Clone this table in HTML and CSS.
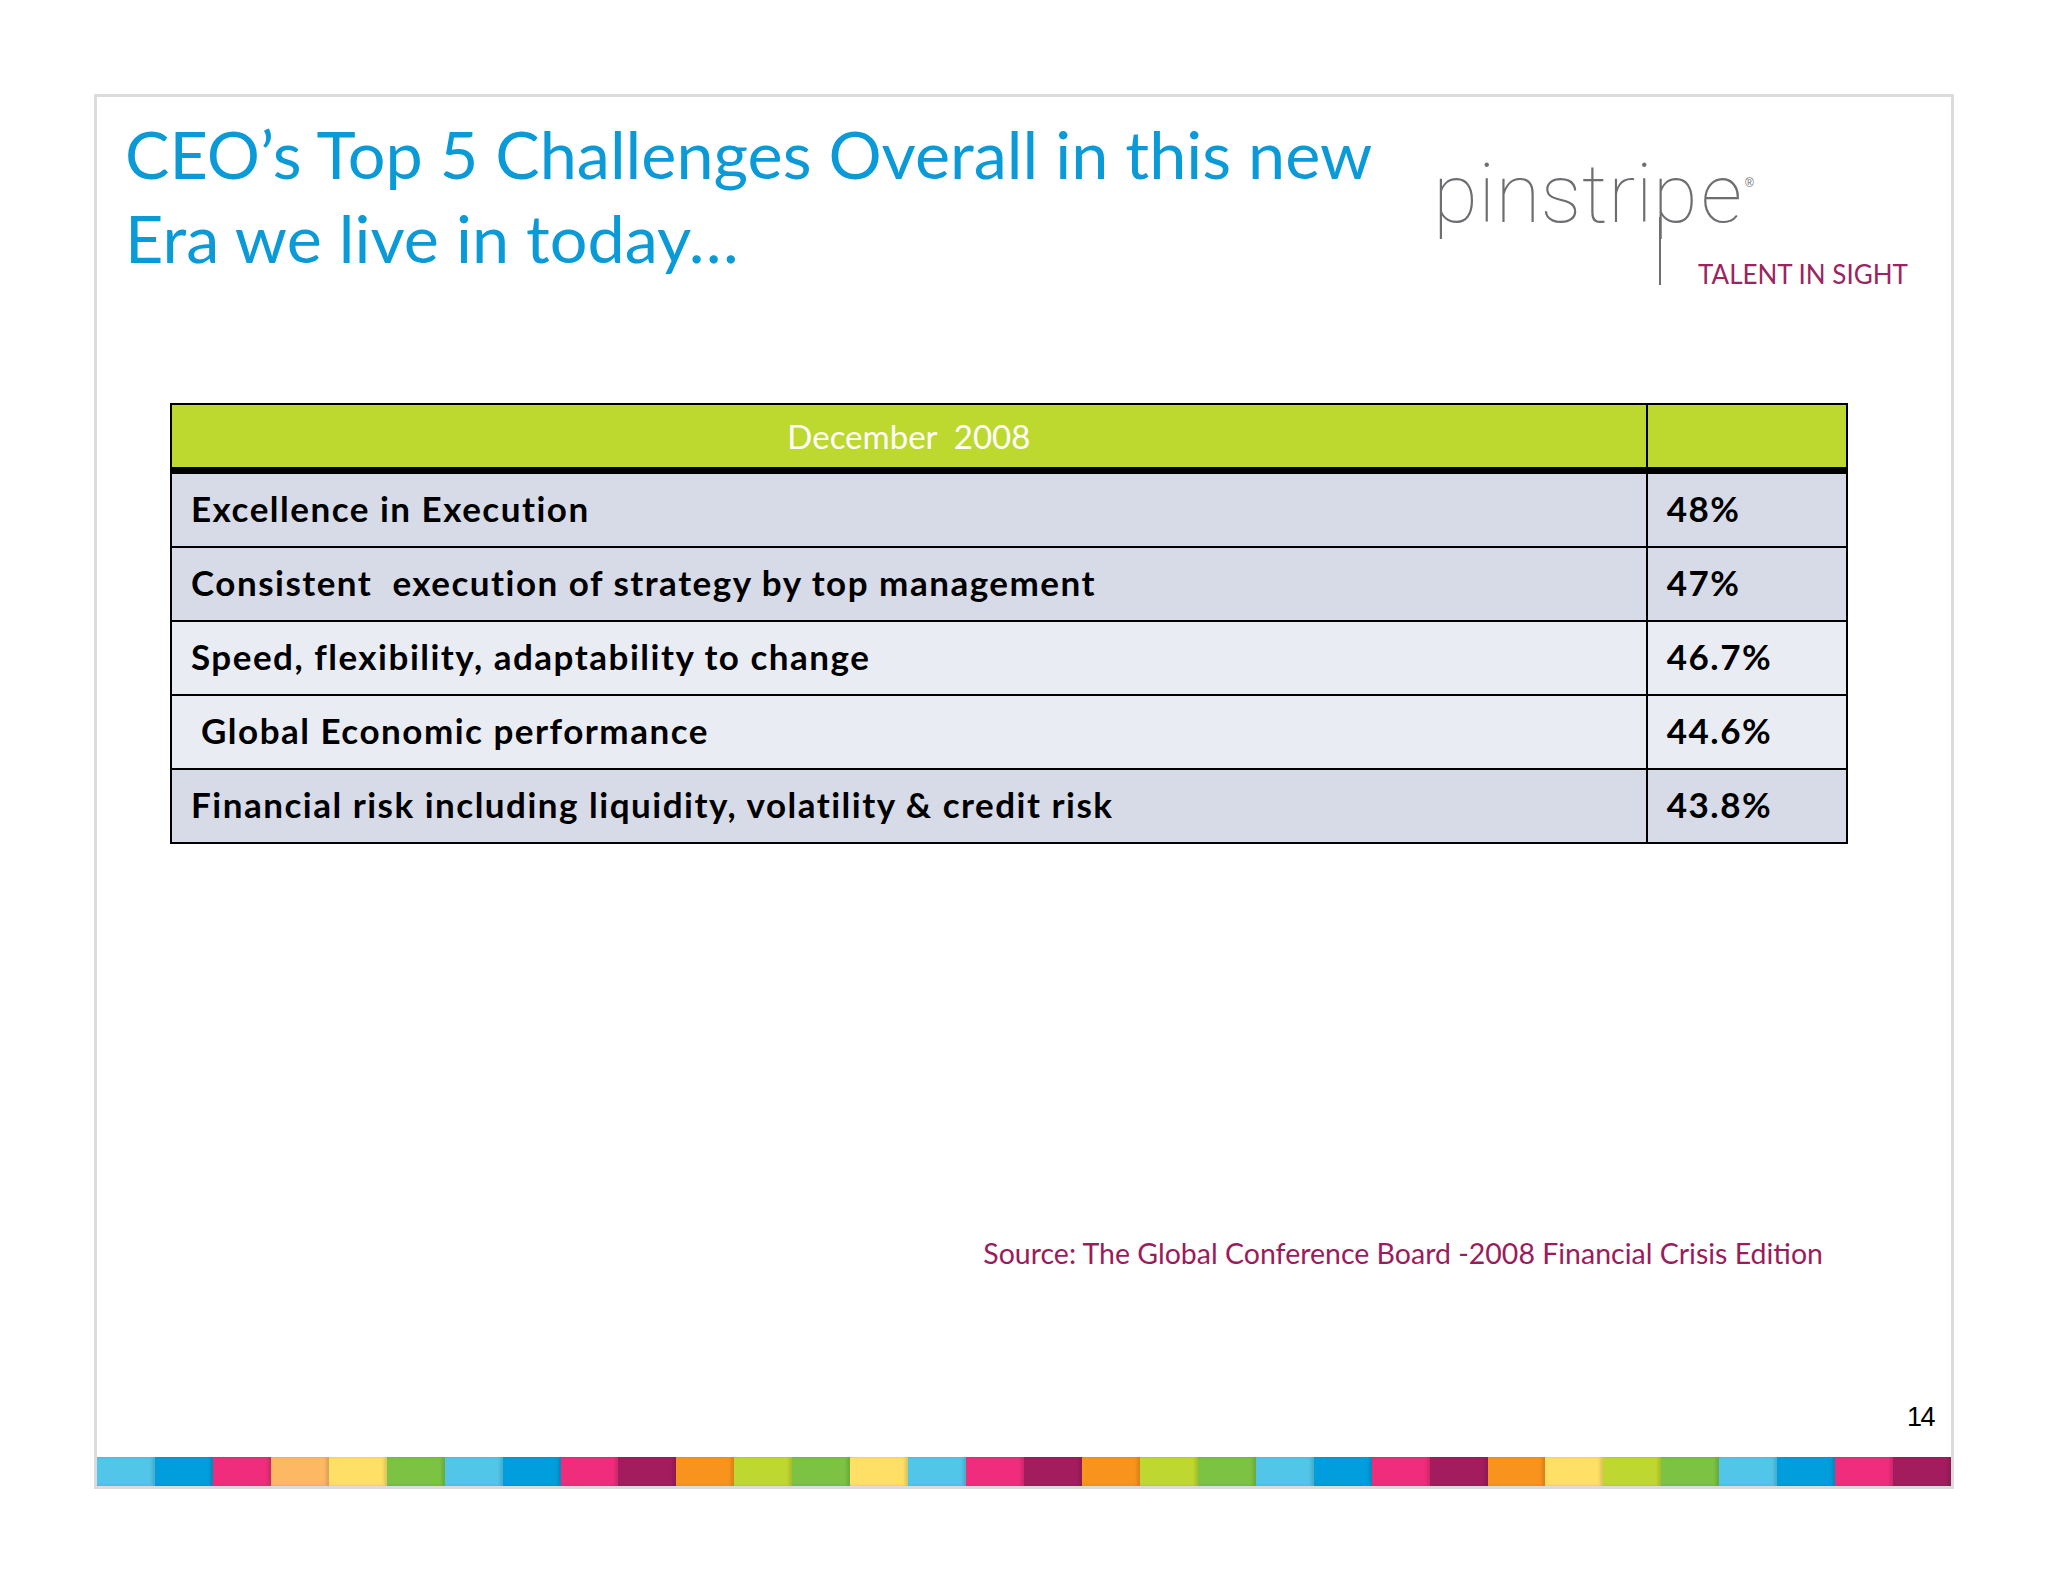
FILE: index.html
```html
<!DOCTYPE html>
<html lang="en">
<head>
<meta charset="utf-8">
<title>CEO's Top 5 Challenges</title>
<link rel="stylesheet" href="styles.css">
</head>
<body>
<div class="slide">
  <header class="head">
    <h1 class="title">CEO’s Top 5 Challenges Overall in this new<br>Era we live in today…</h1>
    <div class="logo">
      <div class="word">pinstri<span class="plong">p</span><span class="elast">e</span><sup class="reg">®</sup></div>
      <div class="tagline">TALENT IN SIGHT</div>
    </div>
  </header>

  <table class="grid">
    <thead>
      <tr>
        <th class="c1">December&nbsp; 2008</th>
        <th class="c2"></th>
      </tr>
    </thead>
    <tbody>
      <tr class="dark"><td class="c1">Excellence in Execution</td><td class="c2">48%</td></tr>
      <tr class="dark"><td class="c1">Consistent&nbsp; execution of strategy by top management</td><td class="c2">47%</td></tr>
      <tr class="light"><td class="c1">Speed, flexibility, adaptability to change</td><td class="c2">46.7%</td></tr>
      <tr class="light"><td class="c1">&nbsp;Global Economic performance</td><td class="c2">44.6%</td></tr>
      <tr class="dark"><td class="c1">Financial risk including liquidity, volatility &amp; credit risk</td><td class="c2">43.8%</td></tr>
    </tbody>
  </table>

  <footer class="foot">
    <p class="source">Source: The Global Conference Board -2008 Financial Crisis Edition</p>
    <p class="pagenum">14</p>
    <div class="bar">
      <span class="lb"></span><span class="bl"></span><span class="pk"></span><span class="lo"></span>
      <span class="ye"></span><span class="gr"></span><span class="lb"></span><span class="bl"></span>
      <span class="pk"></span><span class="mr"></span><span class="or"></span><span class="li"></span>
      <span class="gr"></span><span class="ye"></span><span class="lb"></span><span class="pk"></span>
      <span class="mr"></span><span class="or"></span><span class="li"></span><span class="gr"></span>
      <span class="lb"></span><span class="bl"></span><span class="pk"></span><span class="mr"></span>
      <span class="or"></span><span class="ye"></span><span class="li"></span><span class="gr"></span>
      <span class="lb"></span><span class="bl"></span><span class="pk"></span><span class="mr"></span>
    </div>
  </footer>
</div>
</body>
</html>
```
FILE: styles.css
```css
html, body {
  margin: 0;
  padding: 0;
  background: #ffffff;
}

body {
  font-family: "Lato", "Liberation Sans", sans-serif;
}

.slide {
  box-sizing: border-box;
  margin: 94px 0 0 94px;
  width: 1860px;
  height: 1395px;
  border: 3px solid #dcdcdc;
  display: flex;
  flex-direction: column;
  background: #fff;
}

.head {
  height: 306px;
  display: flex;
  align-items: flex-start;
  padding-left: 28px;
  flex-shrink: 0;
}

.title {
  margin: 0;
  padding-top: 14px;
  flex: 1;
  font-family: "Lato", sans-serif;
  font-weight: 400;
  font-size: 66.5px;
  line-height: 84px;
  color: #0a9ad7;
  white-space: nowrap;
}

.logo {
  width: 474px;
  margin-right: 44px;
  margin-top: 56px;
  flex-shrink: 0;
}

.word {
  font-family: "Roboto", sans-serif;
  font-weight: 100;
  font-size: 82px;
  line-height: 82px;
  letter-spacing: 0.3px;
  color: #6d6e71;
  white-space: nowrap;
}

.plong {
  position: relative;
  letter-spacing: 3px;
}

.elast {
  letter-spacing: 2px;
}

.plong::after {
  content: "";
  position: absolute;
  left: 6px;
  top: calc(100% - 25px);
  width: 2px;
  height: 68px;
  background: #6d6e71;
}

.reg {
  font-family: "Liberation Sans", sans-serif;
  font-size: 12px;
  line-height: 0;
  font-weight: 400;
  vertical-align: 35px;
  letter-spacing: 0;
  margin-left: 1px;
}

.tagline {
  margin-top: 26px;
  padding-left: 265px;
  font-family: "Lato", sans-serif;
  font-size: 26px;
  line-height: 26px;
  color: #9b2560;
  white-space: nowrap;
}

.grid {
  margin-left: 73px;
  width: 1678px;
  border-collapse: collapse;
  flex-shrink: 0;
}

.grid th,
.grid td {
  border: 2px solid #000;
  padding: 0 0 4px 19px;
  text-align: left;
  vertical-align: middle;
}

.grid th {
  background: #bdd82f;
  height: 62px;
  border-bottom: 7px solid #000;
  color: #fff;
  font-weight: 400;
  font-size: 33px;
  text-align: center;
  padding: 0;
}

.grid .c1 { width: 1460px; }
.grid .c2 { width: 180px; }

.grid td {
  height: 68px;
  font-weight: 700;
  font-size: 35px;
  letter-spacing: 1.5px;
  color: #000;
  white-space: nowrap;
}

.grid tr.dark td { background: #d6dbe7; }
.grid tr.light td { background: #eaecf4; }

.foot {
  margin-top: auto;
  display: flex;
  flex-direction: column;
}

.source {
  margin: 0 128px 134px 0;
  align-self: flex-end;
  font-family: "Lato", sans-serif;
  font-size: 28.5px;
  line-height: 34px;
  color: #9b1b5c;
}

.pagenum {
  margin: 0 17px 26px 0;
  align-self: flex-end;
  font-family: "Liberation Sans", sans-serif;
  font-size: 27px;
  line-height: 27px;
  letter-spacing: -1.5px;
  color: #000;
}

.bar {
  display: flex;
  height: 29px;
}

.bar span {
  flex: 1;
  box-shadow: inset -3px 0 3px rgba(0, 0, 0, 0.12);
}

.bar .lb { background: #52c6e8; }
.bar .bl { background: #009edc; }
.bar .pk { background: #ef2d7c; }
.bar .lo { background: #fdb864; }
.bar .ye { background: #fee067; }
.bar .gr { background: #7cc243; }
.bar .mr { background: #a31d5e; }
.bar .or { background: #f8941d; }
.bar .li { background: #bfd831; }
```
